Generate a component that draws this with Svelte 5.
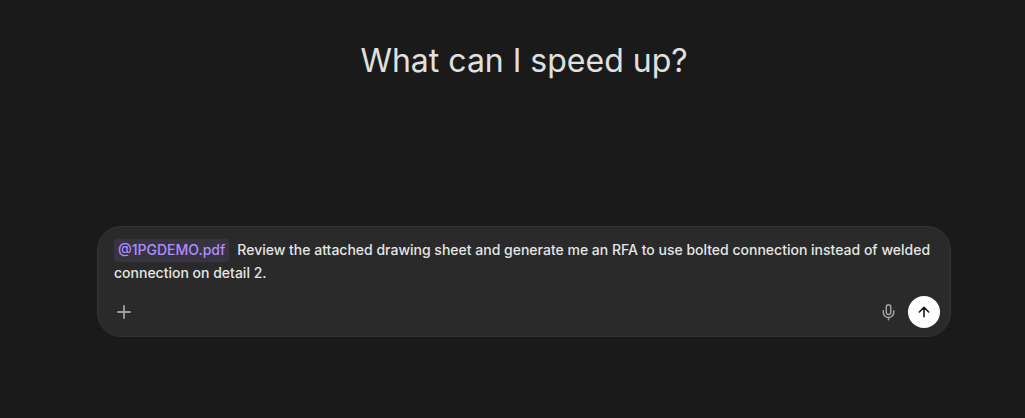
<script lang="ts">
  let attachment: string = '@1PGDEMO.pdf';
  let message: string =
    'Review the attached drawing sheet and generate me an RFA to use bolted connection instead of welded connection on detail 2.';
</script>

<main class="home">
  <h1 class="home__title">What can I speed up?</h1>

  <form class="prompt" on:submit|preventDefault>
    <p class="prompt__text"><span class="prompt__mention">{attachment}</span><span>{message}</span></p>

    <div class="prompt__actions">
      <button type="button" class="icon-button" aria-label="Add">
        <svg width="20" height="20" viewBox="0 0 20 20" fill="none" stroke="currentColor" stroke-width="1.8" stroke-linecap="round">
          <path d="M4 10h12M10 4v12" />
        </svg>
      </button>
      <div class="prompt__right">
        <button type="button" class="icon-button" aria-label="Dictate">
          <svg width="18" height="18" viewBox="-0.7 -0.4 24 24" fill="none" stroke="currentColor" stroke-width="2" stroke-linecap="round" stroke-linejoin="round">
            <path d="M12 2a3 3 0 0 0-3 3v7a3 3 0 0 0 6 0V5a3 3 0 0 0-3-3Z" />
            <path d="M19 10v2a7 7 0 0 1-14 0v-2M12 19v3" />
          </svg>
        </button>
        <button type="submit" class="send-button" aria-label="Send">
          <svg width="16" height="16" viewBox="0 0 24 24" fill="none" stroke="currentColor" stroke-width="2.4" stroke-linecap="round" stroke-linejoin="round">
            <path d="m5 12 7-7 7 7M12 19V5" />
          </svg>
        </button>
      </div>
    </div>
  </form>
</main>

<style>
  :global(body) {
    background-color: #1a1a1a;
  }

  .home {
    display: flex;
    flex-direction: column;
    align-items: center;
    box-sizing: border-box;
    height: 418px;
    padding: 41px 74px 0 97px;
    font-family: Inter, "Liberation Sans", sans-serif;
  }

  .home__title {
    margin: 0 0 145px;
    color: #e0e0e0;
    font-size: 32px;
    font-weight: 400;
    line-height: 40px;
  }

  .prompt {
    box-sizing: border-box;
    width: 100%;
    height: 111px;
    padding: 12px 10px 8px 16px;
    background-color: #2a2a2a;
    border: 1px solid #333;
    border-radius: 24px;
  }

  .prompt__text {
    margin: 0;
    color: #e5e5e5;
    font-size: 14px;
    font-weight: 500;
    line-height: 22.75px;
  }

  .prompt__mention {
    display: inline-block;
    margin-right: 8px;
    padding: 0 4px;
    color: #b18cff;
    background-color: #38343f;
    border-radius: 3px;
  }

  .prompt__actions,
  .prompt__right {
    display: flex;
    align-items: center;
  }

  .prompt__actions {
    justify-content: space-between;
    margin-top: 11.5px;
  }

  .prompt__right {
    gap: 10px;
  }

  .icon-button,
  .send-button {
    display: flex;
    align-items: center;
    justify-content: center;
    padding: 0;
    border: 0;
  }

  .icon-button {
    width: 20px;
    height: 20px;
    color: #a0a0a0;
    background: none;
  }

  .send-button {
    width: 32px;
    height: 32px;
    color: #1a1a1a;
    background-color: #fff;
    border-radius: 50%;
  }
</style>
